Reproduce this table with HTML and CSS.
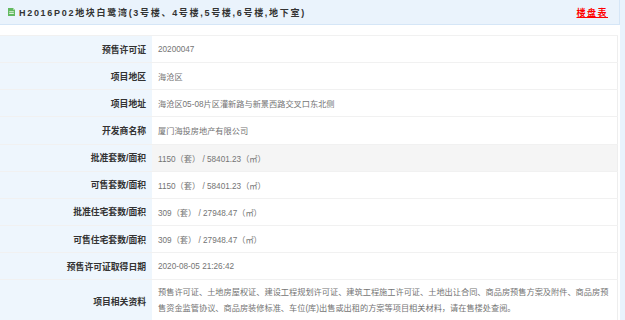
FILE: index.html
```html
<!DOCTYPE html>
<html lang="zh-CN">
<head>
<meta charset="utf-8">
<title>H2016P02地块白鹭湾</title>
<link rel="stylesheet" href="styles.css">
</head>
<body>
<div class="page">
  <div class="header">
    <div class="title">
      <svg class="doc-icon" width="7" height="8" viewBox="0 0 7 8" aria-hidden="true">
        <path d="M0 0H5L7 2V8H0Z" fill="#62b960"/>
        <path d="M5 0V2H7Z" fill="#a9dba8"/>
        <rect x="1.2" y="3.4" width="4.6" height="0.8" fill="#ffffff"/>
        <rect x="1.2" y="5.2" width="4.6" height="0.8" fill="#ffffff"/>
      </svg>
      <span class="title-text">H2016P02地块白鹭湾(3号楼、4号楼,5号楼,6号楼,地下室)</span>
    </div>
    <a class="link" href="#">楼盘表</a>
  </div>
  <table class="info">
    <tr><th>预售许可证</th><td>20200047</td></tr>
    <tr><th>项目地区</th><td>海沧区</td></tr>
    <tr><th>项目地址</th><td>海沧区05-08片区灌新路与新景西路交叉口东北侧</td></tr>
    <tr><th>开发商名称</th><td>厦门海投房地产有限公司</td></tr>
    <tr class="hover"><th>批准套数/面积</th><td>1150（套） / 58401.23（㎡）</td></tr>
    <tr><th>可售套数/面积</th><td>1150（套） / 58401.23（㎡）</td></tr>
    <tr><th>批准住宅套数/面积</th><td>309（套） / 27948.47（㎡）</td></tr>
    <tr><th>可售住宅套数/面积</th><td>309（套） / 27948.47（㎡）</td></tr>
    <tr><th>预售许可证取得日期</th><td>2020-08-05 21:26:42</td></tr>
    <tr class="multi"><th>项目相关资料</th><td>预售许可证、土地房屋权证、建设工程规划许可证、建筑工程施工许可证、土地出让合同、商品房预售方案及附件、商品房预售资金监管协议、商品房装修标准、车位(库)出售或出租的方案等项目相关材料，请在售楼处查阅。</td></tr>
  </table>
</div>
</body>
</html>
```

FILE: styles.css
```css
html, body {
  margin: 0;
  padding: 0;
}
body {
  background: #e9f3fd;
  font-family: "Liberation Sans", "Noto Sans CJK SC", sans-serif;
  height: 320px;
  overflow: hidden;
}
.page {
  width: 620px;
  height: 320px;
  background: #ffffff;
}
.header {
  height: 24px;
  background: #eaf3fc;
  border-bottom: 1px solid #d5e6f7;
  border-right: 1px solid #d5e6f7;
  display: flex;
  align-items: center;
  justify-content: space-between;
  padding: 0 11px 0 8px;
}
.title {
  display: flex;
  align-items: center;
  gap: 4px;
}
.doc-icon {
  display: block;
}
.title-text {
  font-size: 9px;
  font-weight: bold;
  letter-spacing: 1.7px;
  color: #333333;
}
.link {
  font-size: 9px;
  font-weight: bold;
  letter-spacing: 1.5px;
  color: #ff0000;
  text-decoration: underline;
}
.info {
  margin-top: 10px;
  width: 618px;
  border-collapse: collapse;
  border-right: 1px solid #eeeeee;
}
.info tr {
  height: 27.15px;
  border-top: 1px solid #f1f1f1;
}
.info th {
  width: 146px;
  padding: 0 6px 0 0;
  text-align: right;
  background: #eef6fd;
  color: #333333;
  font-size: 8.8px;
  font-weight: bold;
  vertical-align: middle;
}
.info td {
  padding: 0 3px 0 6px;
  color: #747474;
  font-size: 8.2px;
  vertical-align: middle;
}
.info tr.hover td {
  background: #f5f5f5;
}
.info tr.multi td {
  line-height: 16px;
  padding-top: 5px;
  padding-bottom: 5px;
  vertical-align: top;
}
.info tr.multi th {
  vertical-align: middle;
}
```
